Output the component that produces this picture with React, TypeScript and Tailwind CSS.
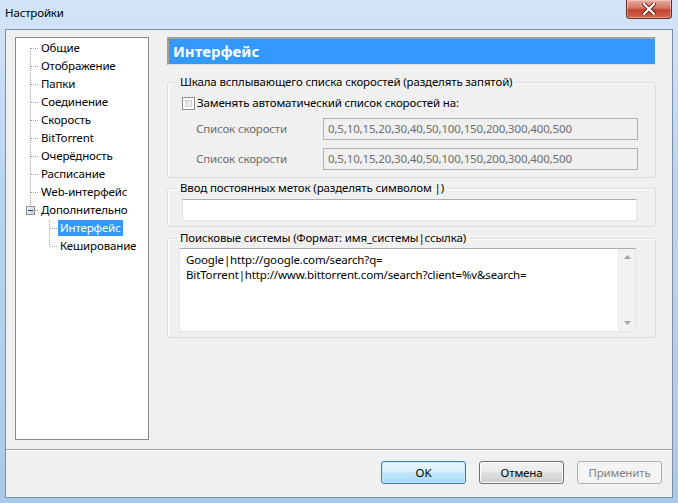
import React from "react";

const FONT = { fontFamily: '"Noto Sans", "Segoe UI", sans-serif' };

const TREE = [
  "Общие",
  "Отображение",
  "Папки",
  "Соединение",
  "Скорость",
  "BitTorrent",
  "Очерёдность",
  "Расписание",
  "Web-интерфейс",
  "Дополнительно",
];

const SPEEDS = "0,5,10,15,20,30,40,50,100,150,200,300,400,500";

function TreeLines() {
  // connectors of the tree, coordinates inside the tree box
  const rows = TREE.map((_, i) => 10 + i * 18);
  return (
    <svg className="absolute left-0 top-0" width="132" height="240" shapeRendering="crispEdges">
      <line x1="14.5" y1="10" x2="14.5" y2="168" stroke="#a0a0a0" strokeDasharray="1 1" />
      {rows.slice(0, 9).map((y) => (
        <line key={y} x1="15" y1={y + 0.5} x2="23" y2={y + 0.5} stroke="#a0a0a0" strokeDasharray="1 1" />
      ))}
      <line x1="19" y1="172.5" x2="23" y2="172.5" stroke="#a0a0a0" strokeDasharray="1 1" />
      <line x1="33.5" y1="182" x2="33.5" y2="208" stroke="#a0a0a0" strokeDasharray="1 1" />
      <line x1="34" y1="190.5" x2="41" y2="190.5" stroke="#a0a0a0" strokeDasharray="1 1" />
      <line x1="34" y1="208.5" x2="41" y2="208.5" stroke="#a0a0a0" strokeDasharray="1 1" />
      <defs>
        <linearGradient id="exp" x1="0" y1="0" x2="1" y2="1">
          <stop offset="0" stopColor="#ffffff" />
          <stop offset="1" stopColor="#c6c6c6" />
        </linearGradient>
      </defs>
      <rect x="10.5" y="168.5" width="8" height="8" fill="url(#exp)" stroke="#919191" />
      <line x1="12" y1="172.5" x2="17" y2="172.5" stroke="#1e3a6e" />
    </svg>
  );
}

function Tree() {
  return (
    <div className="relative w-[134px] h-[403px] border border-[#828790] bg-white">
      <TreeLines />
      <div className="flex flex-col pt-[1px] text-[11.5px] tracking-[-0.15px] text-black">
        {TREE.map((t) => (
          <div key={t} className="flex h-[18px] items-center pl-[25px] leading-[16px]">
            {t}
          </div>
        ))}
        <div className="flex h-[18px] items-center pl-[42px]">
          <span className="bg-[#3399ff] px-[2px] leading-[16px] text-white">Интерфейс</span>
        </div>
        <div className="flex h-[18px] items-center pl-[44px] leading-[16px]">Кеширование</div>
      </div>
    </div>
  );
}

function Group({ label, className, children }: { label: string; className?: string; children: React.ReactNode }) {
  return (
    <fieldset className={`border border-[#d5dfe5] rounded-[3px] shadow-[inset_1px_1px_0_#fff] ${className ?? ""}`}>
      <legend className="ml-[9px] px-[3px] text-[11.5px] tracking-[-0.15px] leading-[16px] text-black">{label}</legend>
      {children}
    </fieldset>
  );
}

function SpeedRow({ className }: { className?: string }) {
  return (
    <div className={`flex h-[22px] items-center ${className ?? ""}`}>
      <span className="w-[155px] pl-[28px] text-[#6d6d6d]">Список скорости</span>
      <div className="flex h-[22px] w-[315px] items-center border border-[#adb2b5] bg-[#f0f0f0] pl-[4px] text-[#6d6d6d]">
        {SPEEDS}
      </div>
    </div>
  );
}

function Arrow({ up }: { up?: boolean }) {
  return (
    <svg width="7" height="4" viewBox="0 0 7 4">
      <path d={up ? "M3.5 0 L7 4 L0 4 Z" : "M0 0 L7 0 L3.5 4 Z"} fill="#a3a3a3" />
    </svg>
  );
}

function Button({ children, kind }: { children: React.ReactNode; kind: "default" | "normal" | "disabled" }) {
  const styles = {
    default:
      "border-[#3c7fb1] bg-[linear-gradient(180deg,#eaf6fd_0%,#d9f0fc_48%,#bee6fd_52%,#a7d9f5_100%)] text-black shadow-[inset_0_0_0_1px_#bfe7fa]",
    normal:
      "border-[#707070] bg-[linear-gradient(180deg,#f2f2f2_0%,#ebebeb_48%,#dddddd_52%,#cfcfcf_100%)] text-black shadow-[inset_0_0_0_1px_#fcfcfc]",
    disabled: "border-[#adb2b5] bg-[#f4f4f4] text-[#838383]",
  }[kind];
  return (
    <div className={`flex h-[23px] w-[85px] items-center justify-center rounded-[3px] border ${styles}`}>
      {children}
    </div>
  );
}

export default function App() {
  return (
    <div
      className="flex h-[503px] w-[678px] flex-col overflow-hidden bg-[linear-gradient(180deg,#d3e5f7_0%,#bcd5ef_35%,#b4cfee_70%,#aac8ea_100%)] text-[11.5px] tracking-[-0.15px]"
      style={FONT}
    >
      {/* title bar */}
      <div className="flex h-[29px] shrink-0 justify-between">
        <span className="pl-[5px] pt-[5px] leading-[16px] text-black">Настройки</span>
        <div className="mr-[6px] flex h-[19px] w-[46px] items-center justify-center rounded-b-[4px] border border-t-0 border-[#6b2a22] bg-[linear-gradient(180deg,#e9aa9d_0%,#d47766_45%,#c2402c_55%,#d26a4f_100%)] shadow-[inset_0_0_0_1px_rgba(255,255,255,0.35)]">
          <svg width="14" height="12" viewBox="0 0 14 12">
            <path d="M2 1 L12 11 M12 1 L2 11" stroke="#5a1d14" strokeWidth="4" strokeLinecap="square" />
            <path d="M2 1 L12 11 M12 1 L2 11" stroke="#ffffff" strokeWidth="2.2" strokeLinecap="square" />
          </svg>
        </div>
      </div>

      <div className="flex">
        <div className="w-[5px] shrink-0" />
        {/* client area */}
        <div className="flex h-[469px] w-[668px] flex-col border border-[#7f8fa3] bg-[#f0f0f0] text-black">
          <div className="flex h-[419px] pl-[9px] pt-[7px]">
            <Tree />
            <div className="ml-[18px] flex w-[489px] flex-col">
              <div className="flex h-[28px] items-center border-l-2 border-t-2 border-r border-b border-[#a0a0a0] border-r-[#f4f4f4] border-b-[#e0e0e0] bg-[#3399ff] pl-[4px] text-[15px] font-bold tracking-normal text-white">
                Интерфейс
              </div>

              <Group label="Шкала всплывающего списка скоростей (разделять запятой)" className="mt-[9px]">
                <div className="mt-[6px] flex h-[14px] items-center pl-[14px]">
                  <div className="h-[13px] w-[13px] border border-[#8e8f8f] bg-white p-[2px]">
                    <div className="h-full w-full border border-[#cfd2d6] bg-[linear-gradient(135deg,#dcdcdc_0%,#f5f5f5_100%)]" />
                  </div>
                  <span className="ml-[2px]">Заменять автоматический список скоростей на:</span>
                </div>
                <SpeedRow className="mt-[8px]" />
                <SpeedRow className="mb-[7px] mt-[8px]" />
              </Group>

              <Group label="Ввод постоянных меток (разделять символом |)" className="mt-[2px]">
                <div className="mb-[5px] ml-[14px] mr-[18px] mt-[3px] h-[22px] border border-[#e2e3ea] border-t-[#abadb3] bg-white" />
              </Group>

              <Group label="Поисковые системы (Формат: имя_системы|ссылка)" className="mt-[3px]">
                <div className="mb-[5px] ml-[11px] mt-[2px] flex h-[84px] w-[457px] border border-[#e2e3ea] border-t-[#abadb3] bg-white">
                  <div className="flex-1 pl-[6px] pt-[3px] leading-[15px]">
                    <div>Google|http://google.com/search?q=</div>
                    <div>BitTorrent|http://www.bittorrent.com/search?client=%v&amp;search=</div>
                  </div>
                  <div className="flex w-[17px] flex-col items-center justify-between border-l border-[#ebebeb] bg-[#f2f2f2] py-[6px]">
                    <Arrow up />
                    <Arrow />
                  </div>
                </div>
              </Group>
            </div>
          </div>

          <div className="h-[2px] border-t border-b border-t-[#a0a0a0] border-b-white" />

          <div className="flex flex-1 justify-end gap-[13px] pr-[10px] pt-[10px]">
            <Button kind="default">OK</Button>
            <Button kind="normal">Отмена</Button>
            <Button kind="disabled">Применить</Button>
          </div>
        </div>
      </div>
    </div>
  );
}
